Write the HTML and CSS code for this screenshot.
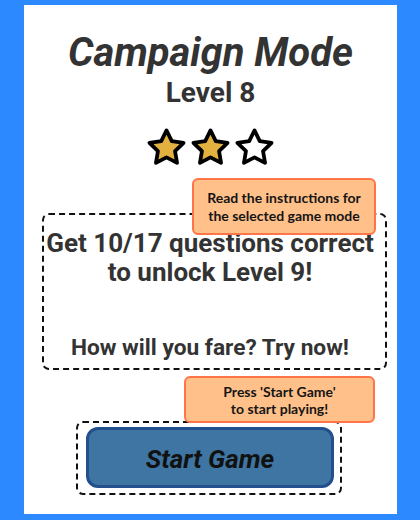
FILE: index.html
```html
<!DOCTYPE html>
<html>
<head>
<meta charset="utf-8">
<link rel="stylesheet" href="styles.css">
</head>
<body>
<div class="panel">
  <h1 class="title">Campaign Mode</h1>
  <div class="level">Level 8</div>
  <div class="stars">
    <svg class="star" viewBox="0 0 24 24"><polygon class="filled" points="12,2 15.09,8.26 22,9.27 17,14.14 18.18,21.02 12,17.77 5.82,21.02 7,14.14 2,9.27 8.91,8.26"/></svg>
    <svg class="star" viewBox="0 0 24 24"><polygon class="filled" points="12,2 15.09,8.26 22,9.27 17,14.14 18.18,21.02 12,17.77 5.82,21.02 7,14.14 2,9.27 8.91,8.26"/></svg>
    <svg class="star" viewBox="0 0 24 24"><polygon class="empty" points="12,2 15.09,8.26 22,9.27 17,14.14 18.18,21.02 12,17.77 5.82,21.02 7,14.14 2,9.27 8.91,8.26"/></svg>
  </div>
  <div class="info">
    <p class="goal">Get 10/17 questions correct<br>to unlock Level 9!</p>
    <p class="prompt">How will you fare? Try now!</p>
    <div class="tip tip-info">Read the instructions for<br>the selected game mode</div>
  </div>
  <div class="start-wrap">
    <button class="start">Start Game</button>
    <div class="tip tip-start">Press 'Start Game'<br>to start playing!</div>
  </div>
</div>
</body>
</html>
```

FILE: styles.css
```css
html, body {
  margin: 0;
  padding: 0;
}
body {
  background: #2d89ff;
  width: 420px;
  height: 520px;
  overflow: hidden;
  font-family: Roboto, "Liberation Sans", sans-serif;
}
.panel {
  box-sizing: border-box;
  width: 373px;
  height: 509px;
  margin: 5px 0 0 24px;
  padding-top: 25px;
  background: #ffffff;
  display: flex;
  flex-direction: column;
  align-items: flex-start;
  text-align: center;
  color: #333333;
}
.title {
  margin: 0;
  width: 100%;
  font-size: 40px;
  line-height: 46px;
  font-style: italic;
  font-weight: 700;
}
.level {
  width: 100%;
  margin-top: 0;
  font-size: 28px;
  line-height: 34px;
  font-weight: 700;
}
.stars {
  width: 100%;
  margin-top: 17px;
  display: flex;
  justify-content: center;
  gap: 3px;
}
.star {
  width: 41px;
  height: 41px;
  display: block;
}
.star polygon {
  stroke: #000000;
  stroke-width: 2.2;
  stroke-linejoin: round;
}
.star .filled { fill: #e3b13f; }
.star .empty { fill: #ffffff; }
.info {
  position: relative;
  box-sizing: border-box;
  margin: 45px 0 0 18px;
  width: 345px;
  height: 157px;
  border: 2px dashed #111111;
  border-radius: 7px;
  padding: 14px 9px 0 0;
  font-size: 26px;
  line-height: 29px;
  font-weight: 700;
}
.goal {
  margin: 0;
  white-space: nowrap;
}
.prompt {
  margin: 46px 0 0 0;
  font-size: 22.7px;
  white-space: nowrap;
}
.tip {
  position: absolute;
  box-sizing: border-box;
  background: #ffc08a;
  border: 2px solid #ff7548;
  border-radius: 6px;
  font-family: Lato, "Open Sans", sans-serif;
  font-weight: 700;
  color: #151515;
  text-align: center;
  display: flex;
  align-items: center;
  justify-content: center;
}
.tip-info {
  left: 148px;
  top: -37px;
  width: 184px;
  height: 57px;
  font-size: 14px;
  line-height: 18px;
}
.start-wrap {
  position: relative;
  box-sizing: border-box;
  margin: 51px 0 0 52px;
  width: 266px;
  height: 74px;
  border: 2px dashed #111111;
  border-radius: 7px;
  padding: 4px 6px 5px 8px;
}
.start {
  display: block;
  box-sizing: border-box;
  width: 248px;
  height: 61px;
  margin: 0;
  padding: 3px 0 0 0;
  background: #3f75a2;
  border: 3px solid #234f8d;
  border-radius: 12px;
  font-family: Roboto, "Liberation Sans", sans-serif;
  font-size: 26px;
  font-weight: 700;
  font-style: italic;
  color: #111111;
}
.tip-start {
  left: 106px;
  top: -47px;
  width: 191px;
  height: 47px;
  font-size: 14px;
  line-height: 17px;
}
```
